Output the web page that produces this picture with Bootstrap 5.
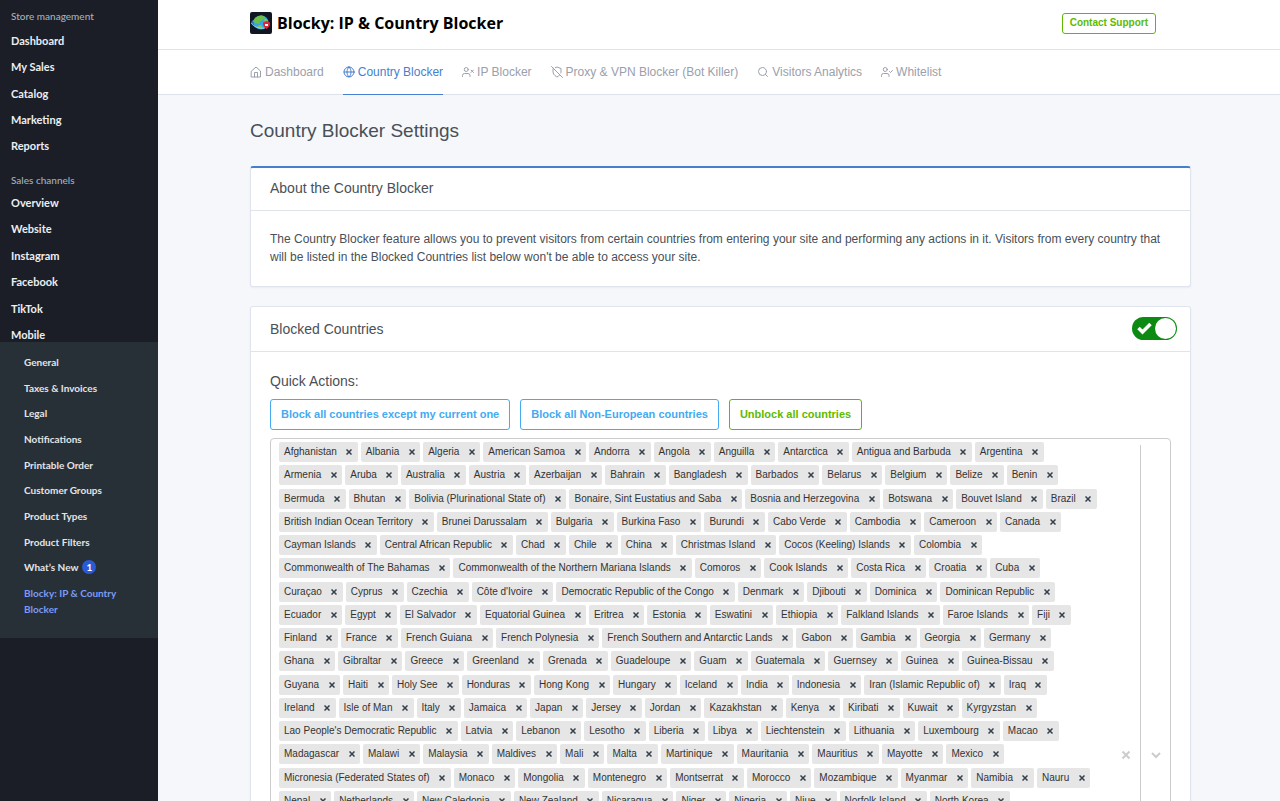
<!DOCTYPE html>
<html lang="en">
<head>
<meta charset="utf-8">
<meta name="viewport" content="width=device-width, initial-scale=1">
<title>Blocky: IP &amp; Country Blocker</title>
<link href="https://cdn.jsdelivr.net/npm/bootstrap@5.3.0/dist/css/bootstrap.min.css" rel="stylesheet">
<style>
  html { scrollbar-width: none; }
  body { font-family: "Liberation Sans", Arial, sans-serif; font-size: 12px; line-height: 18px; color: #495057; background: #f5f7fb; }
  a { text-decoration: none; }

  /* Sidebar */
  .side { width: 158px; padding-top: 9px; background: #1b1e27; font-family: Lato, sans-serif; line-height: 14px; }
  .side a { color: #eceef1; }
  .side-title { font-size: 10px; font-weight: 500; line-height: 14px; color: #a3b1bf; padding: 0 11px; margin: 0; }
  .side-list { padding: 0 11px; font-size: 11px; font-weight: 700; }
  .list-a { min-height: 119px; margin: 11px 0 20px; }
  .list-b { min-height: 146px; margin: 9px 0 0; }
  .side-sub { background: #272f37; padding: 12px 24px 21px; font-size: 10px; line-height: 16px; font-weight: 700; min-height: 296px; }
  .side-sub a { color: #e2e5e8; }
  .side-sub a.current { color: #7b9cf5; }
  .count { width: 14px; height: 14px; line-height: 14px; font-size: 10px; background: #2a5bd7; }

  /* Page frame */
  .frame { padding-left: 92px; padding-right: 89px; }
  .topbar { height: 50px; padding-right: 124px; padding-bottom: 3px; background: #fff; border-bottom: 1px solid #e3e3e3; }
  .brand { font-family: "Open Sans", sans-serif; font-size: 16px; font-weight: 700; color: #000; gap: 5px; line-height: 22px; }
  .tabs { height: 45px; background: #fff; border-bottom: 1px solid #dee2ea; gap: 19px; }
  .tabs .nav-link { display: flex; align-items: center; gap: 3px; padding: 0; height: 45px; color: #9aa0ac; border-bottom: 1px solid transparent; white-space: nowrap; }
  .tabs .nav-link.active { color: #467fcf; border-color: #467fcf; }
  .tabs svg { width: 12px; height: 12px; }
  .line-icon { fill: none; stroke: currentColor; stroke-width: 2; stroke-linecap: round; stroke-linejoin: round; }

  .btn-tool { font-size: 11px; line-height: 17px; font-weight: 700; padding: 6px 10px; border-radius: 3px; background: #fff; }
  .btn-support { font-size: 10px; line-height: 15px; padding: 1px 7px 3px; }
  .btn-sky { color: #45aaf2; border-color: #45aaf2; }
  .btn-leaf { color: #5eba00; border-color: #5eba00; }

  .page-title { font-size: 19px; line-height: 24px; font-weight: 400; margin: 24px 0 23px; }
  .panel { border: 1px solid #dfe4ee; border-radius: 3px; box-shadow: 0 1px 2px rgba(0,0,0,.05); margin-bottom: 19px; --bs-card-color: #495057; }
  .panel.accent { border-top: 2px solid #467fcf; }
  .panel-head { height: 45px; padding: 0 13px 1px 19px; border-bottom: 1px solid #dfe3ea; }
  .accent .panel-head { height: 43px; padding-bottom: 2px; }
  .panel-body { padding: 19px; }
  .about { padding: 19px 19px 20px; }
  .head-text { font-size: 14px; line-height: 20px; font-weight: 400; margin: 0; }
  .actions { gap: 10px; margin: 8px 0; }

  .toggle { appearance: none; width: 45px; height: 23px; border-radius: 12px; background: #bbb; margin: 0; }
  .toggle:checked { background: #0c8a12 url("data:image/svg+xml,%3Csvg xmlns='http://www.w3.org/2000/svg' width='45' height='23'%3E%3Cpath d='M6.5 11l4 4 8-8' fill='none' stroke='%23fff' stroke-width='3.500'/%3E%3Ccircle cx='33.500' cy='11.500' r='10.500' fill='%23fff'/%3E%3C/svg%3E") no-repeat; }

  /* Multi-select of countries */
  .picker { min-height: 634px; border: 1px solid #ccc; border-radius: 4px; background: #fff; }
  .chips { padding: 3px 8px; column-gap: 3px; min-height: 375px; align-content: space-between; }
  .chip { height: 20px; padding-left: 5px; font-size: 10px; line-height: 20px; background: #e6e6e6; color: #333; border-radius: 2px; white-space: nowrap; }
  .chip button { width: 21px; padding: 0 0 0 4px; border: 0; background: none; color: #333f4b; line-height: 0; }
  .chip svg { width: 6px; height: 6px; }
  .picker-tools { color: #ccc; }
  .picker-tools button { border: 0; padding: 0; background: none; color: inherit; width: 29px; line-height: 0; }
  .picker-rule { width: 1px; margin: 6px 0; background: #ccc; }
  .type-box { width: 8px; height: 20px; border: 0; padding: 0; outline: 0; background: transparent; }
</style>
</head>
<body>
<div class="d-flex min-vh-100">
  <nav class="side flex-shrink-0" aria-label="Store">
    <h2 class="side-title">Store management</h2>
    <ul class="side-list list-a list-unstyled d-flex flex-column justify-content-between">
      <li><a href="#">Dashboard</a></li>
      <li><a href="#">My Sales</a></li>
      <li><a href="#">Catalog</a></li>
      <li><a href="#">Marketing</a></li>
      <li><a href="#">Reports</a></li>
    </ul>
    <h2 class="side-title">Sales channels</h2>
    <ul class="side-list list-b list-unstyled d-flex flex-column justify-content-between">
      <li><a href="#">Overview</a></li>
      <li><a href="#">Website</a></li>
      <li><a href="#">Instagram</a></li>
      <li><a href="#">Facebook</a></li>
      <li><a href="#">TikTok</a></li>
      <li><a href="#">Mobile</a></li>
    </ul>
    <ul class="side-sub list-unstyled d-flex flex-column justify-content-between m-0">
      <li><a href="#">General</a></li>
      <li><a href="#">Taxes &amp; Invoices</a></li>
      <li><a href="#">Legal</a></li>
      <li><a href="#">Notifications</a></li>
      <li><a href="#">Printable Order</a></li>
      <li><a href="#">Customer Groups</a></li>
      <li><a href="#">Product Types</a></li>
      <li><a href="#">Product Filters</a></li>
      <li class="d-flex align-items-center gap-1"><a href="#">What’s New</a><span class="count badge rounded-circle p-0">1</span></li>
      <li><a class="current" href="#">Blocky: IP &amp; Country Blocker</a></li>
    </ul>
  </nav>

  <div class="flex-grow-1">
    <header class="topbar frame d-flex align-items-center justify-content-between">
      <a class="brand d-flex align-items-center" href="#">
        <svg width="22" height="22" viewBox="0 0 22 22" aria-hidden="true">
          <rect width="22" height="22" rx="2" fill="#111722"/>
          <ellipse cx="10.500" cy="11.500" rx="9.500" ry="4.500" fill="#2a6fb0" transform="rotate(8 10.500 11.500)"/>
          <ellipse cx="11" cy="10.500" rx="7.500" ry="7" fill="#3aa5e0"/>
          <path d="M5 6c3-3 8-3.500 10-1l-2 3-3 1-1 3-4-1-2-2z" fill="#6cc04a"/>
          <path d="M14 6l3.500 2v2l-3-1zM7 14l4-1 2 3-3 1z" fill="#7ccb50"/>
          <path d="M1.500 11c2 4 8 6 13 5" fill="none" stroke="#8ad4f5"/>
          <path d="M13 10.500l3.500-1.500 3.500 1.500c0 3.500-1 5-3.500 6.500-2.500-1.500-3.500-3-3.500-6.500z" fill="#d9283c"/>
          <rect x="15" y="12" width="3" height="2" fill="#fff"/>
        </svg>
        <span>Blocky: IP &amp; Country Blocker</span>
      </a>
      <button type="button" class="btn btn-tool btn-support btn-leaf">Contact Support</button>
    </header>

    <nav class="tabs nav frame flex-nowrap" aria-label="App">
      <a class="nav-link" href="#"><svg class="line-icon" viewBox="0 0 24 24"><path d="M3 10l9-8 9 8v12H3zM9 22v-9h6v9"/></svg>Dashboard</a>
      <a class="nav-link active" href="#" aria-current="page"><svg class="line-icon" viewBox="0 0 24 24"><circle cx="12" cy="12" r="10"/><path d="M2 12h20M12 2c3 3 4 6.500 4 10s-1 7-4 10c-3-3-4-6.500-4-10s1-7 4-10z"/></svg>Country Blocker</a>
      <a class="nav-link" href="#"><svg class="line-icon" viewBox="0 0 24 24"><circle cx="8.500" cy="7" r="4"/><path d="M1 21v-2a4 4 0 0 1 4-4h7a4 4 0 0 1 4 4v2M18 8l5 5M23 8l-5 5"/></svg>IP Blocker</a>
      <a class="nav-link" href="#"><svg class="line-icon" viewBox="0 0 24 24"><path d="M19.700 14a8 8 0 0 0 .300-2V5l-8-3-3.200 1.200M4.700 4.700L4 5v7c0 6 8 10 8 10a20 20 0 0 0 5.600-4.400M1 1l22 22"/></svg>Proxy &amp; VPN Blocker (Bot Killer)</a>
      <a class="nav-link" href="#"><svg class="line-icon" viewBox="0 0 24 24"><circle cx="11" cy="11" r="8"/><path d="M21 21l-4.300-4.300"/></svg>Visitors Analytics</a>
      <a class="nav-link" href="#"><svg class="line-icon" viewBox="0 0 24 24"><circle cx="8.500" cy="7" r="4"/><path d="M1 21v-2a4 4 0 0 1 4-4h7a4 4 0 0 1 4 4v2M17 11l2 2 4-4"/></svg>Whitelist</a>
    </nav>

    <main class="frame">
      <h1 class="page-title">Country Blocker Settings</h1>

      <section class="card panel accent">
        <div class="panel-head d-flex align-items-center"><h2 class="head-text">About the Country Blocker</h2></div>
        <p class="about m-0">The Country Blocker feature allows you to prevent visitors from certain countries from entering your site and performing any actions in it. Visitors from every country that will be listed in the Blocked Countries list below won't be able to access your site.</p>
      </section>

      <section class="card panel">
        <div class="panel-head d-flex align-items-center justify-content-between">
          <h2 class="head-text"><label for="blocking">Blocked Countries</label></h2>
          <input class="toggle" type="checkbox" role="switch" id="blocking" checked>
        </div>
        <div class="panel-body">
          <h3 class="head-text">Quick Actions:</h3>
          <div class="actions d-flex flex-wrap">
            <button type="button" class="btn btn-tool btn-sky">Block all countries except my current one</button>
            <button type="button" class="btn btn-tool btn-sky">Block all Non-European countries</button>
            <button type="button" class="btn btn-tool btn-leaf">Unblock all countries</button>
          </div>
          <div class="picker d-flex">
            <div class="chips d-flex flex-wrap flex-grow-1 align-self-start" id="chips">
              <input class="type-box" type="text" aria-label="Add a country">
            </div>
            <div class="picker-tools d-flex flex-shrink-0">
              <button type="button" aria-label="Clear all"><svg width="10" height="10" viewBox="0 0 10 10"><path d="M1.500 1.500l7 7M8.500 1.500l-7 7" stroke="currentColor" stroke-width="2"/></svg></button>
              <span class="picker-rule"></span>
              <button type="button" aria-label="Open list"><svg width="10" height="10" viewBox="0 0 10 10"><path d="M1 3l4 4 4-4" fill="none" stroke="currentColor" stroke-width="2"/></svg></button>
            </div>
          </div>
        </div>
      </section>
    </main>
  </div>
</div>

<script src="https://cdn.jsdelivr.net/npm/bootstrap@5.3.0/dist/js/bootstrap.bundle.min.js"></script>
<script>
  const countries = `Afghanistan|Albania|Algeria|American Samoa|Andorra|Angola|Anguilla|Antarctica|Antigua and Barbuda|Argentina|Armenia|Aruba|Australia|Austria|Azerbaijan|Bahrain|Bangladesh|Barbados|Belarus|Belgium|Belize|Benin|Bermuda|Bhutan|Bolivia (Plurinational State of)|Bonaire, Sint Eustatius and Saba|Bosnia and Herzegovina|Botswana|Bouvet Island|Brazil|British Indian Ocean Territory|Brunei Darussalam|Bulgaria|Burkina Faso|Burundi|Cabo Verde|Cambodia|Cameroon|Canada|Cayman Islands|Central African Republic|Chad|Chile|China|Christmas Island|Cocos (Keeling) Islands|Colombia|Commonwealth of The Bahamas|Commonwealth of the Northern Mariana Islands|Comoros|Cook Islands|Costa Rica|Croatia|Cuba|Curaçao|Cyprus|Czechia|Côte d'Ivoire|Democratic Republic of the Congo|Denmark|Djibouti|Dominica|Dominican Republic|Ecuador|Egypt|El Salvador|Equatorial Guinea|Eritrea|Estonia|Eswatini|Ethiopia|Falkland Islands|Faroe Islands|Fiji|Finland|France|French Guiana|French Polynesia|French Southern and Antarctic Lands|Gabon|Gambia|Georgia|Germany|Ghana|Gibraltar|Greece|Greenland|Grenada|Guadeloupe|Guam|Guatemala|Guernsey|Guinea|Guinea-Bissau|Guyana|Haiti|Holy See|Honduras|Hong Kong|Hungary|Iceland|India|Indonesia|Iran (Islamic Republic of)|Iraq|Ireland|Isle of Man|Italy|Jamaica|Japan|Jersey|Jordan|Kazakhstan|Kenya|Kiribati|Kuwait|Kyrgyzstan|Lao People's Democratic Republic|Latvia|Lebanon|Lesotho|Liberia|Libya|Liechtenstein|Lithuania|Luxembourg|Macao|Madagascar|Malawi|Malaysia|Maldives|Mali|Malta|Martinique|Mauritania|Mauritius|Mayotte|Mexico|Micronesia (Federated States of)|Monaco|Mongolia|Montenegro|Montserrat|Morocco|Mozambique|Myanmar|Namibia|Nauru|Nepal|Netherlands|New Caledonia|New Zealand|Nicaragua|Niger|Nigeria|Niue|Norfolk Island|North Korea`.split('|');
  const box = document.getElementById('chips');
  const input = box.querySelector('input');
  for (const name of countries) {
    const chip = document.createElement('span');
    chip.className = 'chip d-inline-flex';
    chip.append(name);
    const remove = document.createElement('button');
    remove.type = 'button';
    remove.setAttribute('aria-label', 'Remove ' + name);
    remove.innerHTML = '<svg viewBox="0 0 6 6"><path d="M.5.5l5 5M5.500.5l-5 5" stroke="currentColor" stroke-width="1.500"/></svg>';
    remove.onclick = () => chip.remove();
    chip.append(remove);
    box.insertBefore(chip, input);
  }
</script>
</body>
</html>
